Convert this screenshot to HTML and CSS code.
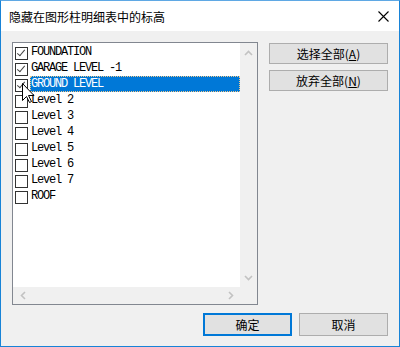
FILE: index.html
```html
<!DOCTYPE html>
<html>
    <head>
        <title>隐藏在图形柱明细表中的标高</title>
        <link rel="stylesheet" href="styles.css">
    </head>
    <body>
        <div class="window">
            <div class="titlebar">
                <span class="title">隐藏在图形柱明细表中的标高</span>
                <svg class="close" width="11" height="11" viewBox="0 0 11 11">
                    <path d="M0.5 0.5 L10.5 10.5 M10.5 0.5 L0.5 10.5" stroke="#000" stroke-width="1.1" fill="none"/>
                </svg>
            </div>
            <div class="content">
                <div class="top">
                    <div class="listbox">
                        <div class="items">
                            <div class="item"><span class="box checked"></span><span class="label">FOUNDATION</span></div>
                            <div class="item"><span class="box checked"></span><span class="label">GARAGE LEVEL -1</span></div>
                            <div class="item"><span class="box checked"></span><span class="label selected">GROUND LEVEL</span></div>
                            <div class="item"><span class="box"></span><span class="label">Level 2</span></div>
                            <div class="item"><span class="box"></span><span class="label">Level 3</span></div>
                            <div class="item"><span class="box"></span><span class="label">Level 4</span></div>
                            <div class="item"><span class="box"></span><span class="label">Level 5</span></div>
                            <div class="item"><span class="box"></span><span class="label">Level 6</span></div>
                            <div class="item"><span class="box"></span><span class="label">Level 7</span></div>
                            <div class="item"><span class="box"></span><span class="label">ROOF</span></div>
                        </div>
                        <div class="vscroll">
                            <svg width="9" height="6" viewBox="0 0 9 6"><path d="M1 5 L4.5 1.5 L8 5" stroke="#c2c2c2" stroke-width="1.6" fill="none"/></svg>
                            <svg width="9" height="6" viewBox="0 0 9 6"><path d="M1 1 L4.5 4.5 L8 1" stroke="#c2c2c2" stroke-width="1.6" fill="none"/></svg>
                        </div>
                        <div class="hscroll">
                            <svg width="6" height="9" viewBox="0 0 6 9"><path d="M5 1 L1.5 4.5 L5 8" stroke="#c2c2c2" stroke-width="1.6" fill="none"/></svg>
                            <svg width="6" height="9" viewBox="0 0 6 9"><path d="M1 1 L4.5 4.5 L1 8" stroke="#c2c2c2" stroke-width="1.6" fill="none"/></svg>
                        </div>
                        <div class="corner"></div>
                    </div>
                    <div class="side">
                        <button class="btn wide">选择全部(<u>A</u>)</button>
                        <button class="btn wide">放弃全部(<u>N</u>)</button>
                    </div>
                </div>
                <div class="bottom">
                    <button class="btn default">确定</button>
                    <button class="btn">取消</button>
                </div>
            </div>
            <svg class="cursor" width="13" height="21" viewBox="0 0 13 21">
                <path d="M0.5 0.5 L0.5 17.5 L4.5 13.5 L7.5 19.5 L9.5 18.5 L6.5 12.5 L12 12.5 Z" fill="#fff" stroke="#000" stroke-width="1" stroke-linejoin="miter"/>
            </svg>
        </div>
    </body>
</html>
```

FILE: styles.css
```css
body{
    margin:0;
    padding:0;
    background-color:#f0f0f0;
    font-family:"Noto Sans CJK SC", sans-serif;
    font-size:12px;
}
.window{
    position:relative;
    width:400px;
    height:347px;
    box-sizing:border-box;
    border:1px solid #1883d7;
    border-top-color:#5fa8e4;
    background-color:#f0f0f0;
    display:flex;
    flex-direction:column;
}
.titlebar{
    height:30px;
    background-color:#fff;
    display:flex;
    align-items:center;
    justify-content:space-between;
    padding:0 10px 0 8px;
}
.title{
    font-size:12px;
    color:#000;
}
.content{
    padding:11px 11px 0 11px;
}
.top{
    display:flex;
    gap:11px;
}
.listbox{
    width:246px;
    height:263px;
    box-sizing:border-box;
    border:1px solid #828790;
    display:grid;
    grid-template-columns:1fr 17px;
    grid-template-rows:1fr 17px;
}
.items{
    background-color:#fff;
    padding-top:1px;
}
.item{
    display:flex;
    align-items:center;
    height:16px;
}
.box{
    width:13px;
    height:13px;
    box-sizing:border-box;
    border:1px solid #333;
    background-color:#fff;
    margin-left:2px;
    margin-top:3px;
    position:relative;
}
.box.checked::after{
    content:"";
    position:absolute;
    left:3px;
    top:0px;
    width:3px;
    height:7px;
    border-right:1.5px solid #444;
    border-bottom:1.5px solid #444;
    transform:rotate(40deg);
}
.label{
    flex:1;
    margin-left:2px;
    height:16px;
    line-height:17px;
    padding-left:1px;
    font-family:"Liberation Mono", monospace;
    font-size:12px;
    letter-spacing:-1.2px;
    color:#000;
    white-space:pre;
}
.label.selected{
    background-color:#0078d7;
    color:#fff;
    outline:1px dotted #f4c98a;
    outline-offset:-1px;
}
.vscroll{
    background-color:#f0f0f0;
    display:flex;
    flex-direction:column;
    justify-content:space-between;
    align-items:center;
    padding:7px 0 6px 0;
}
.hscroll{
    background-color:#f0f0f0;
    display:flex;
    justify-content:space-between;
    align-items:center;
    padding:0 6px 0 7px;
}
.corner{
    background-color:#f0f0f0;
}
.side{
    display:flex;
    flex-direction:column;
    gap:6px;
    padding-top:1px;
}
.btn{
    font-family:"Noto Sans CJK SC", sans-serif;
    font-size:12px;
    color:#000;
    background-color:#e1e1e1;
    border:1px solid #adadad;
    padding:0;
    margin:0;
    line-height:1;
}
.btn u{
    text-decoration:underline;
}
.wide{
    width:119px;
    height:21px;
}
.bottom{
    display:flex;
    justify-content:flex-end;
    gap:7px;
    margin-top:8px;
}
.bottom .btn{
    width:89px;
    height:23px;
}
.btn.default{
    border:2px solid #0078d7;
}
.cursor{
    position:absolute;
    left:21px;
    top:82px;
}
```
